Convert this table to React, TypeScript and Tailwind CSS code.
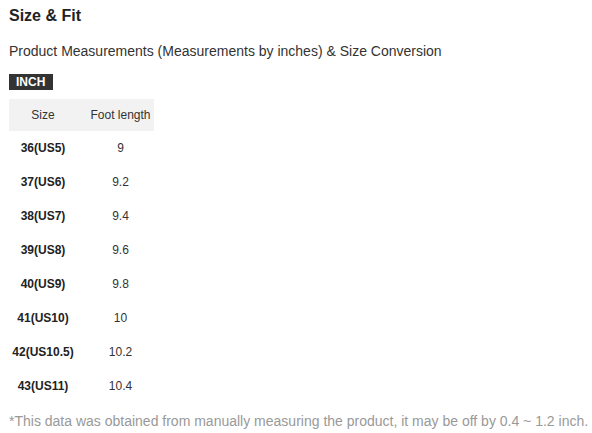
export default function App() {
  const rows: [string, string][] = [
    ["36(US5)", "9"],
    ["37(US6)", "9.2"],
    ["38(US7)", "9.4"],
    ["39(US8)", "9.6"],
    ["40(US9)", "9.8"],
    ["41(US10)", "10"],
    ["42(US10.5)", "10.2"],
    ["43(US11)", "10.4"],
  ];
  return (
    <div className="bg-white w-[592px] h-[433px] px-[9px] pt-[6px]" style={{ fontFamily: '"Liberation Sans", Arial, sans-serif' }}>
      <div className="text-[16px] leading-[20px] font-bold text-[#222]">Size &amp; Fit</div>
      <div className="mt-[16px] text-[14px] leading-[18px] text-[#333]">
        Product Measurements (Measurements by inches) &amp; Size Conversion
      </div>
      <div className="mt-[14px] flex">
        <div className="bg-[#333] text-white text-[12px] h-[16px] leading-[16px] font-bold pl-[7px] pr-[8px]">INCH</div>
      </div>
      <div className="mt-[9px] w-[145px]">
        <div className="flex h-[32px] items-center bg-[#f2f2f2] text-[12px] text-[#333]">
          <div className="w-[68px] text-center">Size</div>
          <div className="w-[77px] pl-[10px] text-center">Foot length</div>
        </div>
        {rows.map(([s, f]) => (
          <div key={s} className="flex h-[34px] items-center text-[12px] text-[#333]">
            <div className="w-[68px] text-center font-bold text-[#222]">{s}</div>
            <div className="w-[77px] pl-[10px] text-center">{f}</div>
          </div>
        ))}
      </div>
      <div className="mt-[9px] text-[14px] leading-[18px] text-[#999] whitespace-nowrap">
        *This data was obtained from manually measuring the product, it may be off by 0.4 ~ 1.2 inch.
      </div>
    </div>
  );
}
